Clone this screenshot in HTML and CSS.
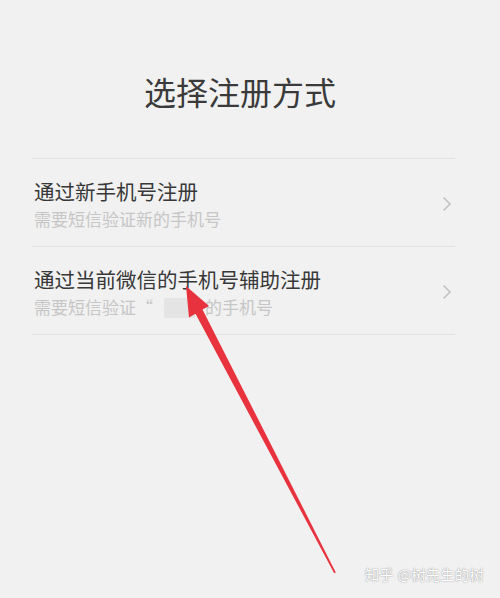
FILE: index.html
```html
<!DOCTYPE html>
<html lang="zh-CN">
<head>
<meta charset="utf-8">
<link rel="stylesheet" href="styles.css">
</head>
<body>
<div class="page">
  <h1 class="title">选择注册方式</h1>
  <ul class="list">
    <li class="row">
      <div class="texts">
        <div class="row-title">通过新手机号注册</div>
        <div class="row-sub">需要短信验证新的手机号</div>
      </div>
      <svg class="chev" width="10" height="16" viewBox="0 0 10 16"><path d="M1.5 1.5 L8 8 L1.5 14.5" fill="none" stroke="#c2c2c2" stroke-width="1.6"/></svg>
    </li>
    <li class="row">
      <div class="texts">
        <div class="row-title">通过当前微信的手机号辅助注册</div>
        <div class="row-sub">需要短信验证“<span class="blur"></span>的手机号</div>
      </div>
      <svg class="chev" width="10" height="16" viewBox="0 0 10 16"><path d="M1.5 1.5 L8 8 L1.5 14.5" fill="none" stroke="#c2c2c2" stroke-width="1.6"/></svg>
    </li>
  </ul>
  <svg class="arrow" width="500" height="598" viewBox="0 0 500 598">
    <polygon points="186,286 209,306 202.5,309.5 335.8,572.5 334.2,573.3 195.5,313.8 189,317.5" fill="#e8333f"/>
  </svg>
  <div class="watermark">知乎 @树先生的树</div>
</div>
</body>
</html>
```
FILE: styles.css
```css
html, body {
  margin: 0;
  padding: 0;
  background: #f1f1f1;
}
.page {
  position: relative;
  width: 500px;
  height: 598px;
  overflow: hidden;
  font-family: "Noto Sans CJK SC", "Noto Sans", sans-serif;
}
.title {
  margin: 0;
  padding: 71px 20px 47px 0;
  font-size: 32px;
  line-height: 40px;
  font-weight: 400;
  color: #3a3a3a;
  text-align: center;
}
.list {
  list-style: none;
  margin: 0 45px 0 32px;
  padding: 0;
  border-top: 1px solid #e3e3e3;
}
.row {
  display: flex;
  align-items: center;
  justify-content: space-between;
  padding: 19px 3px 16px 2px;
  border-bottom: 1px solid #e3e3e3;
}
.row-title {
  font-size: 20.5px;
  line-height: 26px;
  color: #383838;
}
.row-sub {
  margin-top: 4px;
  font-size: 17px;
  line-height: 22px;
  color: #c6c6c6;
  display: flex;
  align-items: center;
}
.blur {
  display: inline-block;
  width: 31px;
  height: 20px;
  margin: 2px 10px 0 11px;
  background: #e4e4e4;
}
.chev {
  display: block;
}
.arrow {
  position: absolute;
  left: 0;
  top: 0;
}
.watermark {
  position: absolute;
  left: 365px;
  top: 564px;
  font-size: 14px;
  line-height: 20px;
  color: #ffffff;
  text-shadow: 0 0 1px #9a9a9a, 0 0 2px #b0b0b0;
  letter-spacing: 0.5px;
}
```
